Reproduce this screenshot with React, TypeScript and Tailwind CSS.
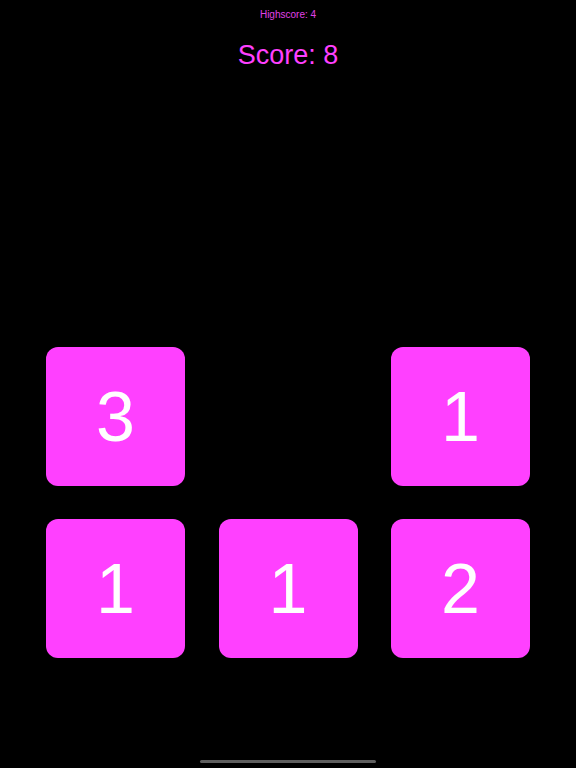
import React from "react";

const tiles: (number | null)[] = [3, null, 1, 1, 1, 2];

export default function App() {
  return (
    <div
      className="relative flex h-[768px] w-[576px] flex-col items-center bg-black"
      style={{ fontFamily: '"Liberation Sans", Arial, sans-serif' }}
    >
      <div className="mt-[9px] h-[12px] text-[10px] leading-[12px] text-[#e040e8]">Highscore: 4</div>
      <div className="mt-[17px] h-[34px] text-[27px] leading-[34px] text-[#ff40ff]">Score: 8</div>
      <div className="mt-[275px] grid grid-cols-[139px_139px_139px] gap-x-[33.5px] gap-y-[33px]">
        {tiles.map((t, i) =>
          t === null ? (
            <div key={i} className="h-[139px] w-[139px]" />
          ) : (
            <div
              key={i}
              className="flex h-[139px] w-[139px] items-center justify-center rounded-[12px] bg-[#ff40ff] text-[70px] leading-none text-white"
            >
              {t}
            </div>
          )
        )}
      </div>
      <div className="absolute bottom-[5px] left-[200px] h-[3px] w-[176px] rounded-full bg-[#5f5f5f]" />
    </div>
  );
}
